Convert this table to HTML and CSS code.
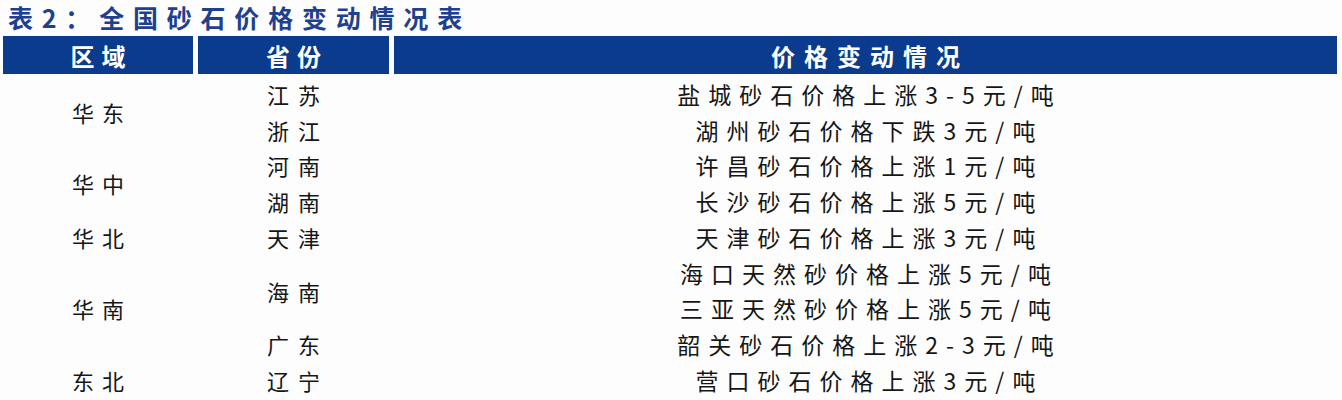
FILE: index.html
```html
<!DOCTYPE html>
<html lang="zh">
<head>
<meta charset="utf-8">
<title>表2：全国砂石价格变动情况表</title>
<link rel="stylesheet" href="styles.css">
</head>
<body>
<div class="page">
  <h1 class="title">表2：全国砂石价格变动情况表</h1>
  <div class="table">
    <div class="th">区域</div>
    <div class="th">省份</div>
    <div class="th th-wide">价格变动情况</div>

    <div class="td region r1-3">华东</div>
    <div class="td prov r1">江苏</div>
    <div class="td info r1">盐城砂石价格上涨3-5元/吨</div>
    <div class="td prov r2">浙江</div>
    <div class="td info r2">湖州砂石价格下跌3元/吨</div>

    <div class="td region r3-5">华中</div>
    <div class="td prov r3">河南</div>
    <div class="td info r3">许昌砂石价格上涨1元/吨</div>
    <div class="td prov r4">湖南</div>
    <div class="td info r4">长沙砂石价格上涨5元/吨</div>

    <div class="td region r5">华北</div>
    <div class="td prov r5">天津</div>
    <div class="td info r5">天津砂石价格上涨3元/吨</div>

    <div class="td region r6-9">华南</div>
    <div class="td prov r6-8">海南</div>
    <div class="td info r6">海口天然砂价格上涨5元/吨</div>
    <div class="td info r7">三亚天然砂价格上涨5元/吨</div>
    <div class="td prov r8">广东</div>
    <div class="td info r8">韶关砂石价格上涨2-3元/吨</div>

    <div class="td region r9">东北</div>
    <div class="td prov r9">辽宁</div>
    <div class="td info r9">营口砂石价格上涨3元/吨</div>
  </div>
</div>
</body>
</html>
```
FILE: styles.css
```css
html, body {
  margin: 0;
  padding: 0;
  background: #fdfdfd;
}
.page {
  padding: 2px 0 0 3px;
  font-family: "Noto Sans CJK SC", "Noto Sans", sans-serif;
  color: #161616;
}
.title {
  margin: 0 0 4px 5px;
  font-size: 25px;
  line-height: 30px;
  font-weight: 700;
  letter-spacing: 8.8px;
  color: #1d4190;
}
.table {
  display: grid;
  grid-template-columns: 190px 191px 943px;
  grid-template-rows: 40px repeat(9, 35.75px);
  column-gap: 5px;
}
.th {
  grid-row: 1;
  background: #0a3b8c;
  color: #ffffff;
  font-size: 24px;
  font-weight: 700;
  letter-spacing: 7px;
  padding-left: 7px;
  display: flex;
  align-items: center;
  justify-content: center;
  margin-bottom: 2px;
}
.th-wide {
  letter-spacing: 9px;
  padding-left: 9px;
}
.td {
  display: flex;
  align-items: center;
  justify-content: center;
  font-size: 22px;
  letter-spacing: 8px;
  padding-left: 8px;
}
.region { grid-column: 1; }
.prov {
  grid-column: 2;
  letter-spacing: 9px;
  padding-left: 9px;
}
.info {
  grid-column: 3;
  font-size: 23px;
  letter-spacing: 8px;
  padding-left: 8px;
}
.r1 { grid-row: 2; }
.r2 { grid-row: 3; }
.r3 { grid-row: 4; }
.r4 { grid-row: 5; }
.r5 { grid-row: 6; }
.r6 { grid-row: 7; }
.r7 { grid-row: 8; }
.r8 { grid-row: 9; }
.r9 { grid-row: 10; }
.r1-3 { grid-row: 2 / 4; }
.r3-5 { grid-row: 4 / 6; }
.r6-9 { grid-row: 7 / 10; }
.r6-8 { grid-row: 7 / 9; }
```
